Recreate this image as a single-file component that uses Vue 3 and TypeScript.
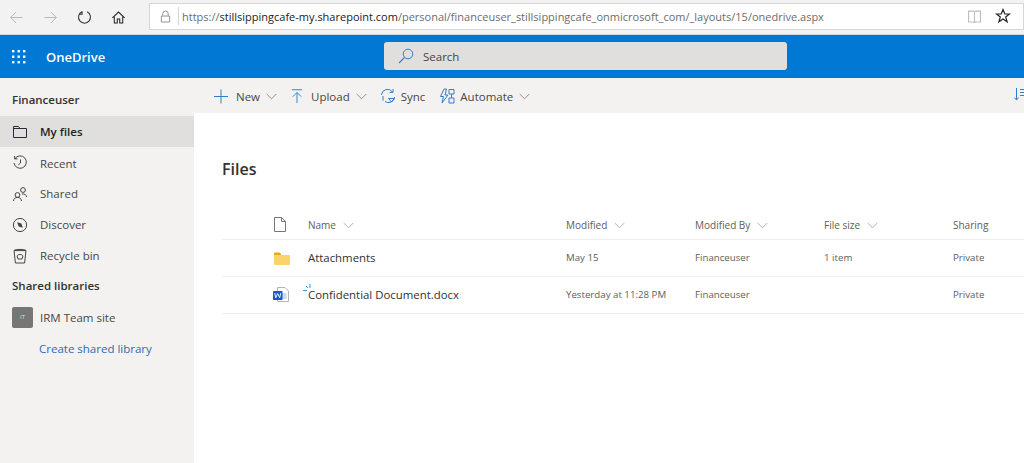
<script setup lang="ts">
const columns = [
  { label: 'Name', cls: 'c-name', chevron: true },
  { label: 'Modified', cls: 'c-mod', chevron: true },
  { label: 'Modified By', cls: 'c-by', chevron: true },
  { label: 'File size', cls: 'c-size', chevron: true },
  { label: 'Sharing', cls: 'c-share', chevron: false },
]
</script>

<template>
  <div class="page">
    <div class="browser">
      <div class="nav-icons">
        <svg class="nav-ic" viewBox="0 0 16 16"><path d="M14.5 8H1.8M7.5 2.2 1.800 8l5.700 5.800" fill="none" stroke="#b4b4b4" stroke-width="1"/></svg>
        <svg class="nav-ic" viewBox="0 0 16 16"><path d="M1.5 8h12.7M8.5 2.2 14.2 8l-5.700 5.800" fill="none" stroke="#b4b4b4" stroke-width="1"/></svg>
        <svg class="nav-ic" viewBox="0 0 16 16"><path d="M5.200 1.900A6.400 6.400 0 1 0 10.800 1.900M5.400 1.200v3.400H2" fill="none" stroke="#333" stroke-width="1.100"/></svg>
        <svg class="nav-ic" viewBox="0 0 16 16"><path d="M1.500 8.500 8 2.200l6.500 6.300M3.500 7.200v6.600h3.200V9.600h2.600v4.200h3.200V7.200" fill="none" stroke="#222" stroke-width="1.100"/></svg>
      </div>
      <div class="address">
        <svg class="lock" viewBox="0 0 12 14"><path d="M3 6V4a3 3 0 0 1 6 0v2M1.500 6.500h9v6.500h-9z" fill="none" stroke="#8a8a8a" stroke-width="1"/></svg>
        <span class="addr-sep"></span>
        <span class="url"><span class="dim">https://</span>stillsippingcafe-my.sharepoint.com<span class="dim">/personal/financeuser_stillsippingcafe_onmicrosoft_com/_layouts/15/onedrive.aspx</span></span>
        <svg class="book" viewBox="0 0 12 12"><path d="M.5 1h4.500l1 .8 1-.8h4.500v10H7l-1 .6-1-.6H.5zM6 1.800V11.500" fill="none" stroke="#bdbdbd" stroke-width="1"/></svg>
        <svg class="star" viewBox="0 0 16 16"><path d="M8 1.600 9.800 6h4.700l-3.800 3 1.400 4.800L8 11l-4.100 2.800L5.300 9 1.500 6h4.700z" fill="none" stroke="#222" stroke-width="1.200"/></svg>
      </div>
    </div>

    <header class="suite">
      <svg class="waffle" viewBox="0 0 14 14"><g fill="#fff"><rect x="0" y="0" width="2.400" height="2.400"/><rect x="5.500" y="0" width="2.400" height="2.400"/><rect x="11" y="0" width="2.400" height="2.400"/><rect x="0" y="5.500" width="2.400" height="2.400"/><rect x="5.500" y="5.500" width="2.400" height="2.400"/><rect x="11" y="5.500" width="2.400" height="2.400"/><rect x="0" y="11" width="2.400" height="2.400"/><rect x="5.500" y="11" width="2.400" height="2.400"/><rect x="11" y="11" width="2.400" height="2.400"/></g></svg>
      <span class="brand">OneDrive</span>
      <div class="search">
        <svg class="search-ic" viewBox="0 0 16 16"><circle cx="10" cy="6" r="4.800" fill="none" stroke="#3a7cc0" stroke-width="1"/><path d="M6.500 9.500 1 15" stroke="#3a7cc0" stroke-width="1.100"/></svg>
        <span>Search</span>
      </div>
    </header>

    <div class="body">
      <aside class="side">
        <div class="side-head first">Financeuser</div>
        <div class="item active">
          <svg class="side-ic" viewBox="0 0 16 14"><path d="M1.500 12.500V1.500h5l1.500 2h6.500v9zM1.500 3.500H8" fill="none" stroke="#2a2a3a" stroke-width="1"/></svg>
          <span>My files</span>
        </div>
        <div class="item i-recent">
          <svg class="side-ic" viewBox="0 0 16 16"><path d="M3 3.600A6.200 6.200 0 1 1 2 8M2.600 1v2.900h2.900M8.500 4.500V8l-2.200 2" fill="none" stroke="#444" stroke-width="1"/></svg>
          <span>Recent</span>
        </div>
        <div class="item i-shared">
          <svg class="side-ic" viewBox="0 0 16 16"><circle cx="5.500" cy="9" r="2.400" fill="none" stroke="#444"/><circle cx="11" cy="4" r="2.400" fill="none" stroke="#444"/><path d="M1.500 15c0-2 1.500-3.600 4-3.600s4 1.600 4 3.600M10 8c2.400-.5 4.500.8 4.500 3" fill="none" stroke="#444"/></svg>
          <span>Shared</span>
        </div>
        <div class="item i-disc">
          <svg class="side-ic" viewBox="0 0 16 16"><circle cx="8" cy="8" r="6.600" fill="none" stroke="#444"/><path d="M5.200 5.200 9.400 6.600 10.800 10.800 6.600 9.400z" fill="#444"/></svg>
          <span>Discover</span>
        </div>
        <div class="item i-bin">
          <svg class="side-ic" viewBox="0 0 16 16"><path d="M2 2.600h12L12.600 15H3.400zM2 2.600c1-1.600 11-1.600 12 0M5 8c1-2 5-2 6 0l-1 3H6z" fill="none" stroke="#444"/></svg>
          <span>Recycle bin</span>
        </div>
        <div class="side-head second">Shared libraries</div>
        <div class="item i-site">
          <span class="site-badge">IT</span>
          <span class="site-name">IRM Team site</span>
        </div>
        <a class="create">Create shared library</a>
      </aside>

      <main class="main">
        <div class="cmd">
          <div class="cmd-item new">
            <svg class="cmd-ic" viewBox="0 0 14 14"><path d="M7 0v14M0 7h14" stroke="#2f7fc8" stroke-width="1"/></svg>
            <span class="cmd-label">New</span>
            <svg class="chev" viewBox="0 0 12 7"><path d="M.8.8 6 6l5.200-5.200" fill="none" stroke="#8a8a8a"/></svg>
          </div>
          <div class="cmd-item upload">
            <svg class="cmd-ic" viewBox="0 0 14 16"><path d="M1.500.8h11M7 15V4M2.500 8.200 7 3.700l4.500 4.500" fill="none" stroke="#2f7fc8"/></svg>
            <span class="cmd-label">Upload</span>
            <svg class="chev" viewBox="0 0 12 7"><path d="M.8.8 6 6l5.200-5.200" fill="none" stroke="#8a8a8a"/></svg>
          </div>
          <div class="cmd-item sync">
            <svg class="cmd-ic wide" viewBox="0 0 16 16"><path d="M1.500 7A6 6 0 0 1 12.500 4M14.500 9A6 6 0 0 1 5 13.500M13 1v3.400H9.600M3 8v4.600" fill="none" stroke="#2f7fc8"/><path d="M8.500 10.500h6l-3 3.500z" fill="none" stroke="#2f7fc8"/></svg>
            <span class="cmd-label">Sync</span>
          </div>
          <div class="cmd-item">
            <svg class="cmd-ic wide" viewBox="0 0 16 16"><path d="M5 1 1.500 8.500h3L3 15l6-8H6l1.500-6zM10 1.500h5v4.500h-5zM10 10h5v5h-5zM12.500 6v4" fill="none" stroke="#2f7fc8"/></svg>
            <span class="cmd-label">Automate</span>
            <svg class="chev" viewBox="0 0 12 7"><path d="M.8.8 6 6l5.200-5.200" fill="none" stroke="#8a8a8a"/></svg>
          </div>
          <svg class="sort" viewBox="0 0 12 14"><path d="M2.500 1v12M.3 10.500l2.200 2.500 2.200-2.500M6 2.500h6M6 5.500h6M6 8.500h4" fill="none" stroke="#2f7fc8"/></svg>
        </div>

        <div class="content">
          <h1 class="title">Files</h1>
          <div class="row head">
            <div class="c-icon">
              <svg class="doc" viewBox="0 0 12 15"><path d="M.5.500h7l4 4v10H.5zM7.500.500v4h4" fill="none" stroke="#777"/></svg>
            </div>
            <div v-for="col in columns" :key="col.label" :class="col.cls">
              {{ col.label }}
              <svg v-if="col.chevron" class="chev head-chev" viewBox="0 0 12 7"><path d="M.8.8 6 6l5.200-5.200" fill="none" stroke="#a8a8a8"/></svg>
            </div>
          </div>
          <div class="row">
            <div class="c-icon">
              <svg class="folder" viewBox="0 0 16 13"><path d="M0 1.500A1 1 0 0 1 1 .5h4.500l1.500 1.500v1H0z" fill="#e8a914"/><path d="M0 3h15a1 1 0 0 1 1 1v8a1 1 0 0 1-1 1H1a1 1 0 0 1-1-1z" fill="#fcd26a"/></svg>
            </div>
            <div class="c-name file">Attachments</div>
            <div class="c-mod">May 15</div>
            <div class="c-by">Financeuser</div>
            <div class="c-size">1 item</div>
            <div class="c-share">Private</div>
          </div>
          <div class="row">
            <div class="c-icon">
              <svg class="word" viewBox="0 0 16 15"><path d="M4.500.500h7.500l3.500 3.500v10.500h-11z" fill="#fff" stroke="#b5b5b5"/><path d="M9 7h4.500M9 9h4.500M9 11h4.500" stroke="#9ab7dc"/><rect x="0" y="4" width="9.500" height="9" rx=".8" fill="#185abd"/><path d="M1.700 6l1.100 4.800L4.700 6.500 6.700 10.800 7.800 6" fill="none" stroke="#fff" stroke-width=".9"/></svg>
            </div>
            <div class="c-name file">
              <svg class="spark" viewBox="0 0 9 8"><path d="M7 0v4M0 6.500h4M3 2l2 2" stroke="#3f97dc" stroke-width="1"/></svg>
              Confidential Document.docx
            </div>
            <div class="c-mod">Yesterday at 11:28 PM</div>
            <div class="c-by">Financeuser</div>
            <div class="c-size"></div>
            <div class="c-share">Private</div>
          </div>
        </div>
      </main>
    </div>
  </div>
</template>

<style>
html, body { margin: 0; background: #fff; overflow: hidden; }
</style>

<style scoped>
.page {
  width: 1024px;
  height: 463px;
  overflow: hidden;
  display: flex;
  flex-direction: column;
  font-family: "Open Sans", "Noto Sans", sans-serif;
  color: #333;
}
.browser {
  height: 35px;
  flex: none;
  background: #f2f2f2;
  display: flex;
  align-items: center;
  box-sizing: border-box;
  border-bottom: 1px solid #d8d8d8;
}
.nav-icons {
  display: flex;
  gap: 19px;
  padding-left: 9px;
  width: 149px;
  box-sizing: border-box;
}
.nav-ic { width: 15px; height: 15px; }
.address {
  width: 875px;
  height: 27px;
  margin-top: -2px;
  box-sizing: border-box;
  background: #fff;
  border: 1px solid #d6d6d6;
  display: flex;
  align-items: center;
  font-size: 11px;
}
.lock { width: 11px; height: 13px; margin-left: 10px; }
.addr-sep { width: 1px; height: 18px; background: #d4d4d4; margin: 0 3px 0 7px; }
.url { color: #222; white-space: nowrap; flex: 1; }
.dim { color: #6d6d6d; }
.book { width: 13px; height: 13px; margin-right: 14px; }
.star { width: 16px; height: 16px; margin-right: 12px; }
.suite {
  height: 43px;
  flex: none;
  background: #0078d4;
  display: flex;
  align-items: center;
  color: #fff;
}
.waffle { width: 14px; height: 14px; margin-left: 12px; }
.brand { font-size: 13px; font-weight: 600; margin-left: 20px; width: 338px; }
.search {
  width: 403px;
  height: 28px;
  background: #e1dfdd;
  border-radius: 3px;
  display: flex;
  align-items: center;
  color: #444;
  font-size: 11.500px;
  box-sizing: border-box;
  padding-left: 14px;
  margin-top: -1px;
}
.search-ic { width: 16px; height: 16px; margin-right: 9px; }
.body { flex: 1; display: flex; min-height: 0; }
.side {
  width: 194px;
  flex: none;
  background: #f3f2f1;
  font-size: 12px;
  display: flex;
  flex-direction: column;
}
.side-head { font-weight: 600; padding-left: 12px; color: #323130; font-size: 11.500px; }
.side-head.first { height: 38px; line-height: 43px; }
.side-head.second { height: 29px; line-height: 29px; }
.item {
  height: 31px;
  display: flex;
  align-items: center;
  padding-left: 12px;
  color: #484644;
  font-size: 11.500px;
}
.item.active { background: #e1dfdd; font-weight: 600; color: #201f1e; }
.i-recent span { position: relative; top: 1px; }
.side-ic { width: 16px; height: 16px; margin-right: 12px; flex: none; }
.site-badge {
  width: 21px;
  height: 21px;
  background: #767676;
  color: #ddd;
  border-radius: 2px;
  font-size: 6px;
  line-height: 21px;
  text-align: center;
  margin-right: 7px;
}
.i-site { height: 35px; }
.site-name { color: #484644; }
.create {
  color: #2b6cb0;
  font-size: 11.500px;
  padding-left: 39px;
  line-height: 27px;
}
.main { flex: 1; min-width: 0; display: flex; flex-direction: column; }
.cmd {
  height: 35px;
  flex: none;
  box-sizing: border-box;
  padding-top: 1px;
  background: #f3f2f1;
  display: flex;
  align-items: center;
  font-size: 11.500px;
  color: #484644;
  padding-left: 20px;
  position: relative;
}
.cmd-item { display: flex; align-items: center; margin-right: 8px; }
.cmd-item.new { margin-right: 13px; }
.cmd-item.upload { margin-right: 13px; }
.cmd-item.sync { margin-right: 8px; }
.cmd-ic { width: 14px; height: 15px; margin-right: 7px; }
.cmd-item.new .cmd-ic { margin-right: 8px; }
.cmd-ic.wide { width: 16px; height: 16px; margin-right: 5px; }
.cmd-label { margin-right: 6px; }
.chev { width: 11px; height: 7px; }
.sort { position: absolute; right: -2px; top: 9px; width: 12px; height: 14px; }
.content { padding: 0 0 0 28px; }
.title { font-size: 16px; font-weight: 600; margin: 0; color: #323130; padding-top: 45px; height: 52px; line-height: 22px; }
.row {
  display: flex;
  align-items: center;
  height: 34px;
  padding-bottom: 2px;
  border-bottom: 1px solid #f0efee;
  font-size: 9.700px;
  color: #605e5c;
  white-space: nowrap;
}
.row.head { font-size: 10px; height: 29px; padding-bottom: 0; }
.c-icon { width: 86px; padding-left: 52px; box-sizing: border-box; flex: none; display: flex; align-items: center; }
.c-name { width: 258px; flex: none; position: relative; }
.c-mod { width: 129px; flex: none; }
.c-by { width: 129px; flex: none; }
.c-size { width: 129px; flex: none; }
.c-share { flex: none; }
.file { font-size: 11.400px; color: #323130; }
.head-chev { margin-left: 4px; }
.doc { width: 12px; height: 15px; }
.folder { width: 16px; height: 13px; margin-top: 2px; }
.word { width: 16px; height: 15px; margin-left: -1px; }
.spark { position: absolute; left: -5px; top: -3px; width: 9px; height: 8px; }
</style>
